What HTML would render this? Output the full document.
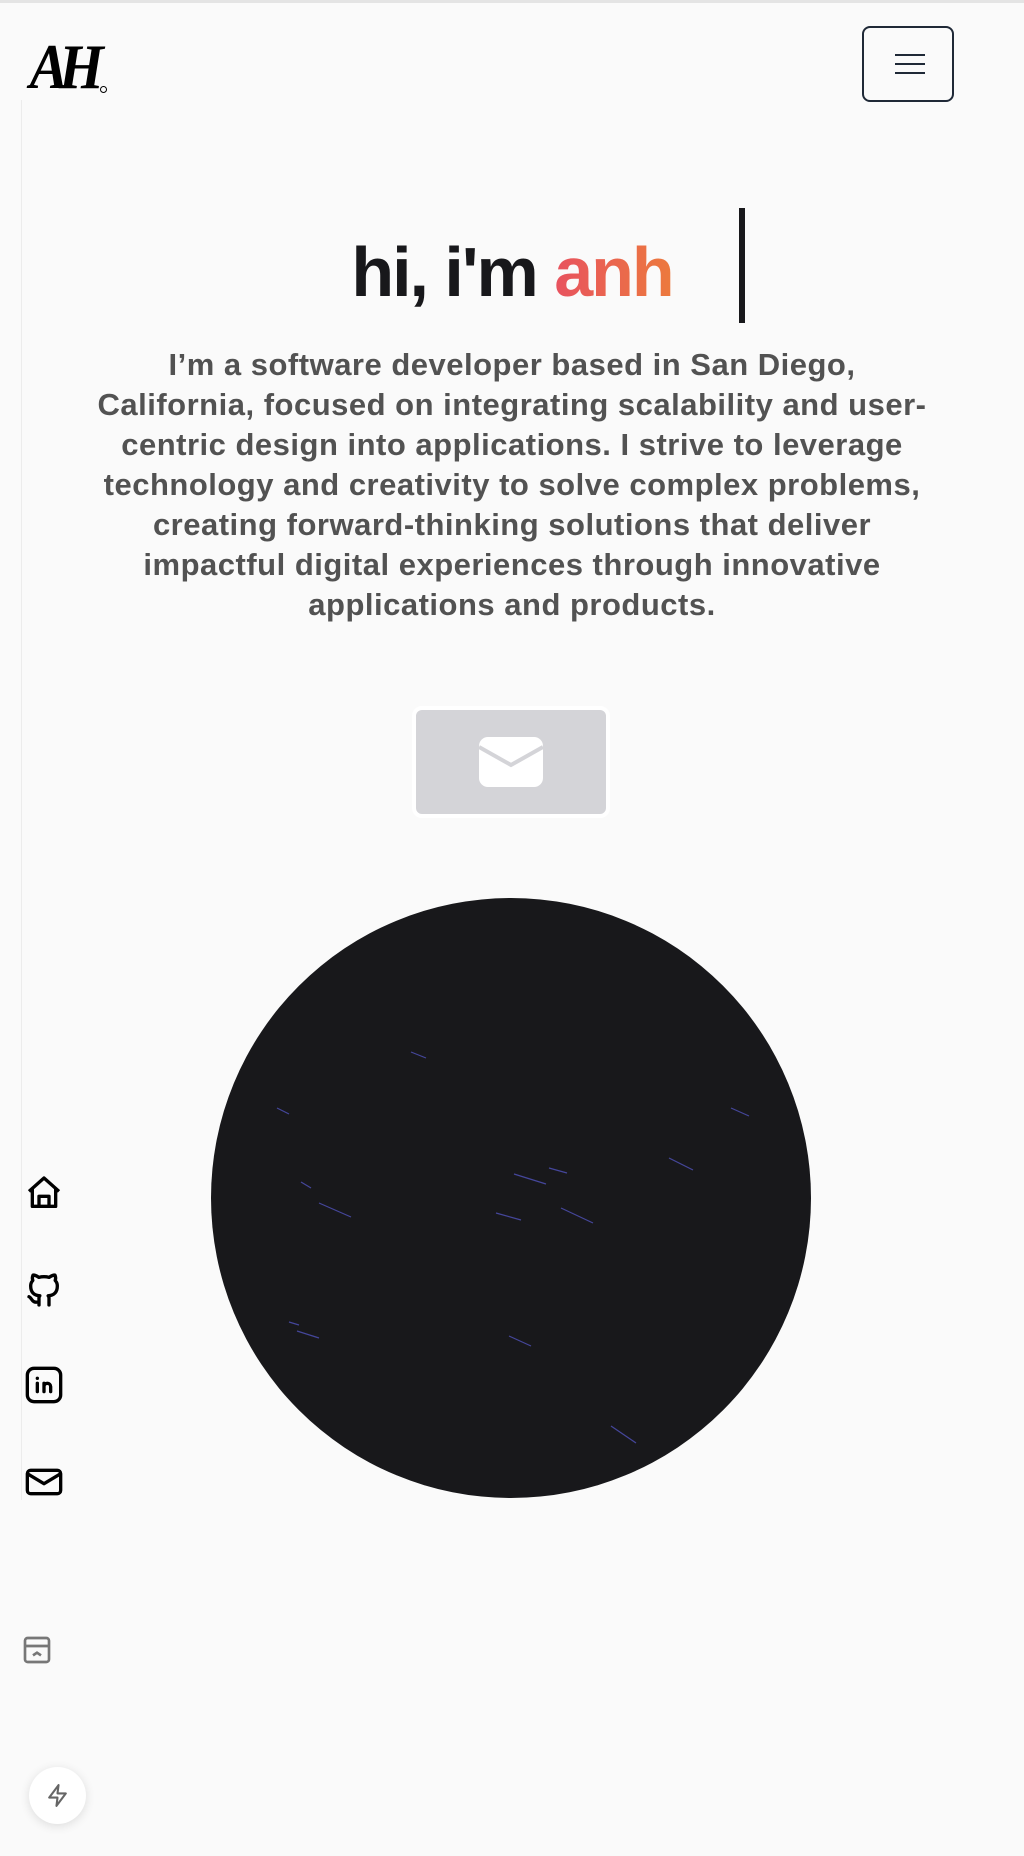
<!DOCTYPE html>
<html><head><meta charset="utf-8"><style>
*{margin:0;padding:0;box-sizing:border-box}
html,body{width:1024px;height:1856px;overflow:hidden;background:#fafafa;font-family:"Liberation Sans",sans-serif}
.top{position:absolute;left:0;top:0;width:1024px;height:3px;background:#e4e4e4}
.vline{position:absolute;left:21px;top:100px;width:1px;height:1400px;background:#ececec}
.logo{position:absolute;left:26px;top:30px;font-family:"Liberation Serif",serif;font-style:italic;font-weight:bold;font-size:64px;letter-spacing:-10px;color:#000;transform:scaleX(0.9)}
.menu{position:absolute;left:862px;top:26px;width:92px;height:76px;border:2px solid #1f2937;border-radius:8px}
.menu i{position:absolute;left:31px;width:30px;height:2px;background:#1f2937}
h1{position:absolute;left:0;width:1024px;top:232px;text-align:center;font-size:70px;font-weight:bold;color:#18181b;letter-spacing:-2px}
h1 span{background:linear-gradient(90deg,#e8525f,#ec7a3d);-webkit-background-clip:text;color:transparent}
.cur{position:absolute;left:739px;top:208px;width:6px;height:115px;background:#18181b}
.p{position:absolute;left:0;top:345px;width:1024px;text-align:center;font-size:31px;font-weight:bold;color:#525252;line-height:40px;letter-spacing:0.5px;white-space:nowrap}
.btn{position:absolute;left:412px;top:706px;width:198px;height:112px;background:#d4d4d8;border:4px solid #fff;border-radius:10px}
.circle{position:absolute;left:211px;top:898px;width:600px;height:600px;border-radius:50%;background:#18181b;overflow:hidden}
.side svg{position:absolute;left:24px}
.bolt{position:absolute;left:29px;top:1767px;width:57px;height:57px;border-radius:50%;background:#fff;box-shadow:0 2px 10px rgba(0,0,0,.12)}
</style></head><body>
<div class="top"></div>
<div class="vline"></div>
<div class="logo">AH</div>
<div style="position:absolute;left:100px;top:86px;width:7px;height:7px;border:1px solid #000;border-radius:50%"></div>
<div class="menu"><i style="top:26px"></i><i style="top:35px"></i><i style="top:44px"></i></div>
<h1>hi, i'm <span>anh</span></h1>
<div class="cur"></div>
<div class="p">I’m a software developer based in San Diego,<br>California, focused on integrating scalability and user-<br>centric design into applications. I strive to leverage<br>technology and creativity to solve complex problems,<br>creating forward-thinking solutions that deliver<br>impactful digital experiences through innovative<br>applications and products.</div>
<div class="btn"><svg style="position:absolute;left:63px;top:27px" width="64" height="50" viewBox="0 0 64 50"><rect width="64" height="50" rx="9" fill="#fff"/><path d="M0 10 L32 28 L64 10" stroke="#d4d4d8" stroke-width="4" fill="none"/></svg></div>
<div class="circle">
<svg width="600" height="600" style="position:absolute;left:0;top:0" stroke="#6366f1" stroke-width="1.2" opacity=".6">
<line x1="200" y1="154" x2="215" y2="160"/><line x1="66" y1="210" x2="78" y2="216"/><line x1="520" y1="210" x2="538" y2="218"/><line x1="458" y1="260" x2="482" y2="272"/><line x1="303" y1="276" x2="335" y2="286"/><line x1="338" y1="270" x2="356" y2="275"/><line x1="90" y1="284" x2="100" y2="290"/><line x1="108" y1="305" x2="140" y2="319"/><line x1="285" y1="315" x2="310" y2="322"/><line x1="350" y1="310" x2="382" y2="325"/><line x1="78" y1="424" x2="88" y2="427"/><line x1="86" y1="433" x2="108" y2="440"/><line x1="298" y1="438" x2="320" y2="448"/><line x1="400" y1="528" x2="425" y2="545"/>
</svg></div>
<div class="side">
<svg style="top:1173px" width="40" height="40" viewBox="0 0 24 24" fill="none" stroke="#000" stroke-width="2" stroke-linejoin="round"><path d="M3 11 L12 3 L21 11 M5 9 V20 H19 V9 M9 20 V14 H15 V20"/></svg>
<svg style="top:1270px" width="40" height="40" viewBox="0 0 24 24" fill="none" stroke="#000" stroke-width="2" stroke-linecap="round" stroke-linejoin="round"><path d="M9 19c-4.3 1.4-4.3-2.5-6-3m12 5v-3.5c0-1 .1-1.4-.5-2 2.8-.3 5.5-1.4 5.5-6a4.6 4.6 0 0 0-1.300-3.2 4.2 4.2 0 0 0-.1-3.2s-1.1-.3-3.5 1.3a12.3 12.3 0 0 0-6.2 0C6.5 2.8 5.4 3.1 5.4 3.1a4.2 4.2 0 0 0-.1 3.2A4.6 4.6 0 0 0 4 9.5c0 4.6 2.7 5.7 5.5 6-.6.6-.6 1.2-.5 2V21"/></svg>
<svg style="top:1365px" width="40" height="40" viewBox="0 0 24 24" fill="none" stroke="#000" stroke-width="2" stroke-linecap="round"><rect x="2" y="2" width="20" height="20" rx="4"/><path d="M8 11v5M8 8v.01M12 16v-5M16 16v-3a2 2 0 0 0-4 0"/></svg>
<svg style="top:1462px" width="40" height="40" viewBox="0 0 24 24" fill="none" stroke="#000" stroke-width="2" stroke-linejoin="round"><rect x="2" y="5" width="20" height="14" rx="2"/><path d="M2 7l10 6 10-6"/></svg>
<svg style="top:1634px;left:21px" width="32" height="32" viewBox="0 0 24 24" fill="none" stroke="#777" stroke-width="2"><rect x="3" y="3" width="18" height="18" rx="2"/><path d="M3 9h18M9 16l3-2 3 2"/></svg>
</div>
<div class="bolt"><svg style="position:absolute;left:16px;top:16px" width="25" height="25" viewBox="0 0 24 24" fill="none" stroke="#666" stroke-width="2" stroke-linejoin="round"><path d="M13 2 L4 14 H12 L11 22 L20 10 H12 Z"/></svg></div>
</body></html>
